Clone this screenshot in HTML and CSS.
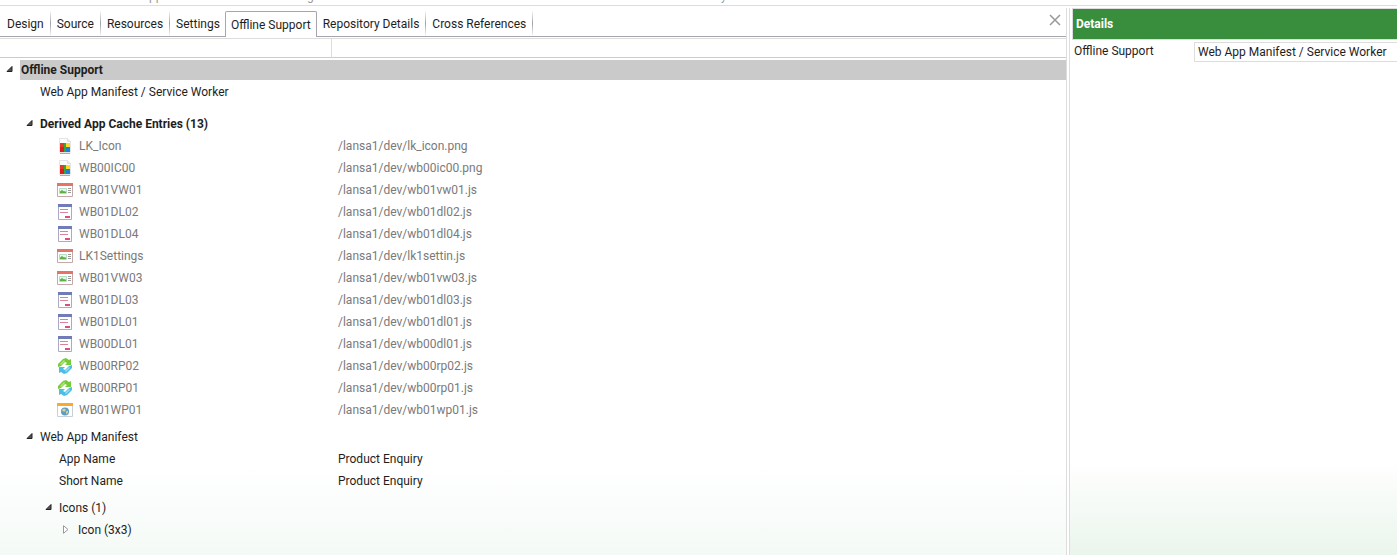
FILE: index.html
```html
<!DOCTYPE html>
<html lang="en">
<head>
<meta charset="utf-8">
<title>Offline Support</title>
<link rel="stylesheet" href="styles.css">
</head>
<body>
<svg class="sprite" aria-hidden="true">
  <symbol id="open" viewBox="0 0 8 8"><path d="M7 .5v5H2z" fill="#555" stroke="#222"/></symbol>
  <symbol id="closed" viewBox="0 0 8 10"><path d="M.5.700v7.600L5 4.500z" fill="#fff" stroke="#999"/></symbol>
  <symbol id="image" viewBox="0 0 16 16"><path d="M2.500.5h8l3 3v11h-11z" fill="#fcfcfc" stroke="#e2e4e6"/><path d="M10.500.5v3h3" fill="#eee" stroke="#dcdfe2"/><path d="M3 5h4v4H3z" fill="#e23b2a"/><path d="M7 5h2v4H7z" fill="#35a838"/><path d="M9 5h4v4H9z" fill="#ffd928"/><path d="M3 9h4v5H3z" fill="#d91f1f"/><path d="M7 9h2v5H7z" fill="#35a838"/><path d="M9 9h4v5H9z" fill="#1f7fd6"/><path d="M3 15.500h10" stroke="#aaa"/></symbol>
  <symbol id="view" viewBox="0 0 16 16"><path d="M.5 2.500h15v12H.5z" fill="#fff" stroke="#c5a9a9"/><path d="M0 1h16v3H0z" fill="#e57368"/><path d="M2.500 6.500h7v5h-7z" fill="#e8f5f7" stroke="#b9dcc0"/><path d="M3 11V9.500L5 8l2 1.500L8 9l1 1v1z" fill="#5eb13d"/><path d="M11 6.500h3M11 8.500h3M11 10.500h3" stroke="#999"/></symbol>
  <symbol id="dialog" viewBox="0 0 16 16"><path d="M1.500 1.500h13v14h-13z" fill="#fff" stroke="#a9abc5"/><path d="M1 0h14v3H1z" fill="#717bb7"/><path d="M3 5.500h8M3 8.500h8" stroke="#d9849d"/><path d="M8 12h5v2H8z" fill="#dc4b84"/></symbol>
  <symbol id="part" viewBox="0 0 16 16"><path d="M1 9V6l5-5 3-1 3 2 2-1v6H8l2-2-2-1-4 4z" fill="#76ca3b"/><path d="M3 6l4-4 1 1-4 4z" fill="#b5e87a"/><path d="M15 7v3l-5 5-3 1-3-2-2 1V9h6l-2 2 2 1 4-4z" fill="#4abfe6"/><path d="M13 10l-4 4-1-1 4-4z" fill="#9be0f5"/></symbol>
  <symbol id="page" viewBox="0 0 16 16"><path d="M.5 1.500h15v13H.5z" fill="#fff" stroke="#c7d0d8"/><path d="M0 1h16v3H0z" fill="#f9aa2b"/><circle cx="8" cy="9.500" r="4" fill="#5b9cc2"/><path d="M5 8l2-1.500 2 1-1 2H6zM9 9.500l2-1v2l-2 2z" fill="#d8d19a"/></symbol>
</svg>
<div class="app">
  <div class="caption"><span>pp</span><span>g</span><span>y</span></div>
  <main class="workspace">
    <section class="editor">
      <nav class="tabs">
        <button class="tab">Design</button><button class="tab">Source</button><button class="tab">Resources</button><button class="tab last">Settings</button><button class="tab active">Offline Support</button><button class="tab">Repository Details</button><button class="tab">Cross References</button>
        <button class="close" aria-label="Close"><svg width="12" height="12" viewBox="0 0 12 12"><path d="M1 1l10 10M11 1L1 11" stroke="#999" stroke-width="1.500"/></svg></button>
      </nav>
      <table class="tree">
        <colgroup><col class="name-col"><col></colgroup>
        <thead><tr><th></th><th></th></tr></thead>
        <tbody>
        <tr class="root"><td colspan="2"><div class="node l0"><span class="slot"><svg class="arrow"><use href="#open"/></svg></span><b class="selected">Offline Support</b></div></td></tr>
        <tr><td><div class="node l1"><span class="slot"></span>Web App Manifest / Service Worker</div></td><td></td></tr>
        <tr class="gap-large"><td><div class="node l1"><span class="slot"><svg class="arrow"><use href="#open"/></svg></span><b>Derived App Cache Entries (13)</b></div></td><td></td></tr>
        <tr class="entry"><td><div class="node"><svg class="icon"><use href="#image"/></svg>LK_Icon</div></td><td>/lansa1/dev/lk_icon.png</td></tr>
        <tr class="entry"><td><div class="node"><svg class="icon"><use href="#image"/></svg>WB00IC00</div></td><td>/lansa1/dev/wb00ic00.png</td></tr>
        <tr class="entry"><td><div class="node"><svg class="icon"><use href="#view"/></svg>WB01VW01</div></td><td>/lansa1/dev/wb01vw01.js</td></tr>
        <tr class="entry"><td><div class="node"><svg class="icon"><use href="#dialog"/></svg>WB01DL02</div></td><td>/lansa1/dev/wb01dl02.js</td></tr>
        <tr class="entry"><td><div class="node"><svg class="icon"><use href="#dialog"/></svg>WB01DL04</div></td><td>/lansa1/dev/wb01dl04.js</td></tr>
        <tr class="entry"><td><div class="node"><svg class="icon"><use href="#view"/></svg>LK1Settings</div></td><td>/lansa1/dev/lk1settin.js</td></tr>
        <tr class="entry"><td><div class="node"><svg class="icon"><use href="#view"/></svg>WB01VW03</div></td><td>/lansa1/dev/wb01vw03.js</td></tr>
        <tr class="entry"><td><div class="node"><svg class="icon"><use href="#dialog"/></svg>WB01DL03</div></td><td>/lansa1/dev/wb01dl03.js</td></tr>
        <tr class="entry"><td><div class="node"><svg class="icon"><use href="#dialog"/></svg>WB01DL01</div></td><td>/lansa1/dev/wb01dl01.js</td></tr>
        <tr class="entry"><td><div class="node"><svg class="icon"><use href="#dialog"/></svg>WB00DL01</div></td><td>/lansa1/dev/wb00dl01.js</td></tr>
        <tr class="entry"><td><div class="node"><svg class="icon"><use href="#part"/></svg>WB00RP02</div></td><td>/lansa1/dev/wb00rp02.js</td></tr>
        <tr class="entry"><td><div class="node"><svg class="icon"><use href="#part"/></svg>WB00RP01</div></td><td>/lansa1/dev/wb00rp01.js</td></tr>
        <tr class="entry"><td><div class="node"><svg class="icon"><use href="#page"/></svg>WB01WP01</div></td><td>/lansa1/dev/wb01wp01.js</td></tr>
        <tr class="gap-small"><td><div class="node l1"><span class="slot"><svg class="arrow"><use href="#open"/></svg></span>Web App Manifest</div></td><td></td></tr>
        <tr><td><div class="node l2"><span class="slot"></span>App Name</div></td><td>Product Enquiry</td></tr>
        <tr><td><div class="node l2"><span class="slot"></span>Short Name</div></td><td>Product Enquiry</td></tr>
        <tr class="gap-small"><td><div class="node l2"><span class="slot"><svg class="arrow"><use href="#open"/></svg></span>Icons (1)</div></td><td></td></tr>
        <tr><td><div class="node l3"><span class="slot"><svg class="arrow closed"><use href="#closed"/></svg></span>Icon (3x3)</div></td><td></td></tr>
        </tbody>
      </table>
    </section>
    <aside class="details">
      <h2>Details</h2>
      <div class="field"><label for="support">Offline Support</label><input id="support" value="Web App Manifest / Service Worker"></div>
    </aside>
  </main>
</div>
</body>
</html>
```
FILE: styles.css
```css
* { box-sizing: border-box; }
body { margin: 0; color: #1e1e1e; background: #fff; font: 12px/16px Roboto, "Open Sans", sans-serif; }
button, input { font: inherit; color: inherit; }
button { background: none; border: 0; padding: 0; }
.sprite { display: none; }
.app { display: flex; flex-direction: column; min-height: 100vh; }

.caption {
  display: grid;
  grid-template-columns: 158px 414px auto;
  align-content: end;
  height: 5px;
  padding: 0 0 1px 149px;
  overflow: hidden;
  color: #999;
}

.workspace { flex: 1; display: flex; gap: 2px; padding-top: 2px; border-top: 1px solid #ddd; }
.editor {
  flex: 1;
  min-width: 0;
  border-right: 1px solid #ddd;
  background: linear-gradient(#fff, #f4faf6) bottom / 100% 90px no-repeat;
}

.tabs {
  display: flex;
  height: 29px;
  padding: 3px 0 0 1px;
  border-bottom: 1px solid #a6a6ae;
  background: #fff;
}
.tab {
  height: 25px;
  padding: 0 6px;
  border-right: 1px solid;
  border-image: linear-gradient(#fff, #a0a0a8 50%, #fff) 1;
  white-space: nowrap;
}
.tab.last { padding-right: 5px; border-right: 0; }
.tab.active {
  height: 26px;
  padding: 0 5px;
  border: 1px solid #a6a6ae;
  border-bottom: 0;
  border-image: none;
  border-radius: 2px 2px 0 0;
  background: #fff;
}
.close { align-self: flex-start; height: 18px; margin-left: auto; padding: 0 5px; }
.close svg { display: block; }

.tree { width: 100%; margin-top: 1px; border-collapse: separate; border-spacing: 0; table-layout: fixed; }
.name-col { width: 332px; }
th { height: 20px; padding: 0; border-top: 1px solid #ddd; border-bottom: 1px solid #ccc; background: #fff; }
th:first-child { border-right: 1px solid #ddd; }
td { height: 22px; padding: 0; vertical-align: bottom; line-height: 22px; }
td + td { padding-left: 6px; }
.node { display: flex; align-items: center; height: 22px; white-space: nowrap; }
.l0 { padding-left: 5px; }
.l1 { padding-left: 25px; }
.l2 { padding-left: 44px; }
.l3 { padding-left: 63px; }
.slot { width: 15px; flex: none; }
.arrow { display: block; width: 8px; height: 8px; }
.arrow.closed { height: 10px; }
.icon { width: 16px; height: 16px; margin-right: 6px; }
.entry { color: #7a7a7a; }
.entry .node { padding-left: 57px; }
.root td { height: 23px; }
.gap-large td { height: 32px; }
.gap-small td { height: 27px; }
.selected { flex: 1; height: 20px; padding-left: 1px; background: #cacaca; line-height: 20px; }

.details {
  width: 328px;
  overflow: hidden;
  border-left: 1px solid #ddd;
  background: linear-gradient(#fff, #eaf5ec) bottom / 100% 94px no-repeat;
}
h2 {
  margin: 0 0 0 2px;
  padding: 7px 3px;
  border: solid #ddd;
  border-width: 1px 0 1px 1px;
  background: #388e3c;
  color: #fff;
  font-size: 12px;
  line-height: 16px;
}
.field { display: flex; margin-top: 2px; padding-left: 4px; }
.field label { width: 120px; flex: none; padding-top: 1px; }
.field input { flex: 1; min-width: 0; height: 20px; padding: 0 3px; border: solid #ddd; border-width: 1px 0 1px 1px; background: #fff; }
```
